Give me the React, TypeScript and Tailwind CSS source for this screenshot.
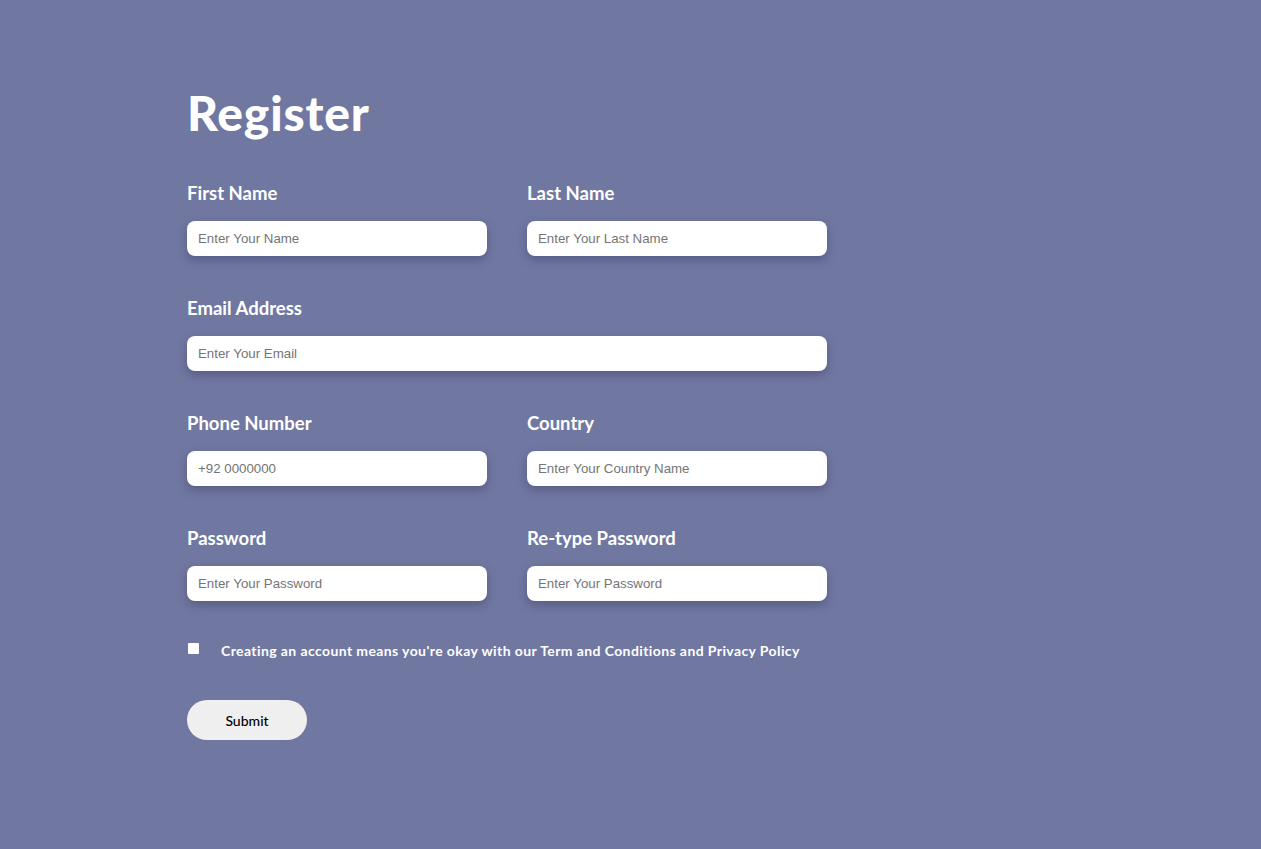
import React from 'react';

const labelCls = "block text-[18.5px] leading-6 font-bold text-white mb-4";
const inputCls = "w-full h-[35px] bg-white rounded-lg px-[11px] text-[13.3px] text-gray-800 placeholder:text-[#757575] outline-none shadow-[0_4px_10px_rgba(40,44,80,0.35)] font-['Liberation_Sans',Arial,sans-serif]";

function Field({ label, placeholder, type = 'text' }: { label: string; placeholder: string; type?: string }) {
  return (
    <div>
      <label className={labelCls}>{label}</label>
      <input type={type} placeholder={placeholder} className={inputCls} />
    </div>
  );
}

export default function App() {
  return (
    <div className="min-h-screen bg-[#7077a1] font-['Lato','Open_Sans',sans-serif] pl-[187px] pt-[84px]">
      <form className="w-[640px]" onSubmit={(e) => e.preventDefault()}>
        <h1 className="text-[48px] leading-[58px] font-black tracking-[0.8px] text-white mb-[39px]">Register</h1>

        <div className="grid grid-cols-2 gap-x-10 gap-y-10">
          <Field label="First Name" placeholder="Enter Your Name" />
          <Field label="Last Name" placeholder="Enter Your Last Name" />
          <div className="col-span-2">
            <Field label="Email Address" placeholder="Enter Your Email" type="email" />
          </div>
          <Field label="Phone Number" placeholder="+92 0000000" />
          <Field label="Country" placeholder="Enter Your Country Name" />
          <Field label="Password" placeholder="Enter Your Password" type="password" />
          <Field label="Re-type Password" placeholder="Enter Your Password" type="password" />
        </div>

        <div className="flex items-center mt-[40px] ml-px h-5">
          <input type="checkbox" className="w-[11px] h-[11px] m-0 -mt-[5px] appearance-none bg-white rounded-[1px]" />
          <span className="ml-[22px] text-[14px] leading-5 font-bold tracking-[0.4px] text-white">
            Creating an account means you're okay with our Term and Conditions and Privacy Policy
          </span>
        </div>

        <button type="submit" className="block mt-[39px] w-[120px] h-[40px] rounded-full bg-[#efefef] text-[14px] font-medium text-black">
          Submit
        </button>
      </form>
    </div>
  );
}
